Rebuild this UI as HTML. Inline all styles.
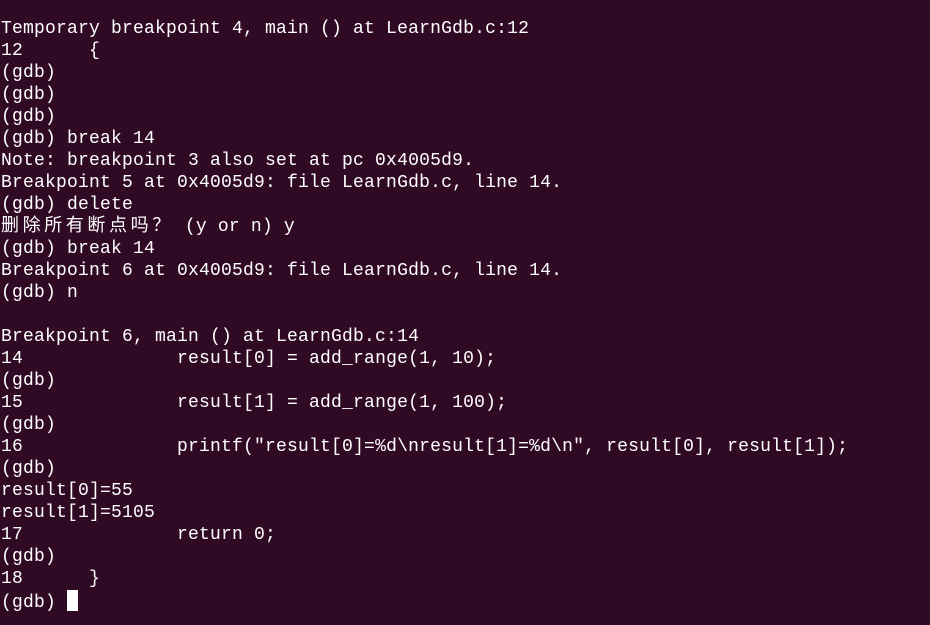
<!DOCTYPE html>
<html><head><meta charset="utf-8"><style>
html,body{margin:0;padding:0;background:#300a24;width:930px;height:625px;overflow:hidden}
pre{margin:0;padding:18px 0 0 1px;color:#fff;font-family:"Liberation Mono","Noto Sans CJK SC",monospace;font-size:18px;line-height:22px;white-space:pre;letter-spacing:0.2px;tab-size:8}
.z{letter-spacing:3.6px}
.c{display:inline-block;width:11px;height:21px;background:#fff;vertical-align:-4px}
</style></head><body><pre>Temporary breakpoint 4, main () at LearnGdb.c:12
12	{
(gdb)
(gdb)
(gdb)
(gdb) break 14
Note: breakpoint 3 also set at pc 0x4005d9.
Breakpoint 5 at 0x4005d9: file LearnGdb.c, line 14.
(gdb) delete
<span class="z">删除所有断点吗？</span> (y or n) y
(gdb) break 14
Breakpoint 6 at 0x4005d9: file LearnGdb.c, line 14.
(gdb) n

Breakpoint 6, main () at LearnGdb.c:14
14		result[0] = add_range(1, 10);
(gdb)
15		result[1] = add_range(1, 100);
(gdb)
16		printf("result[0]=%d\nresult[1]=%d\n", result[0], result[1]);
(gdb)
result[0]=55
result[1]=5105
17		return 0;
(gdb)
18	}
(gdb) <span class="c"></span></pre></body></html>
